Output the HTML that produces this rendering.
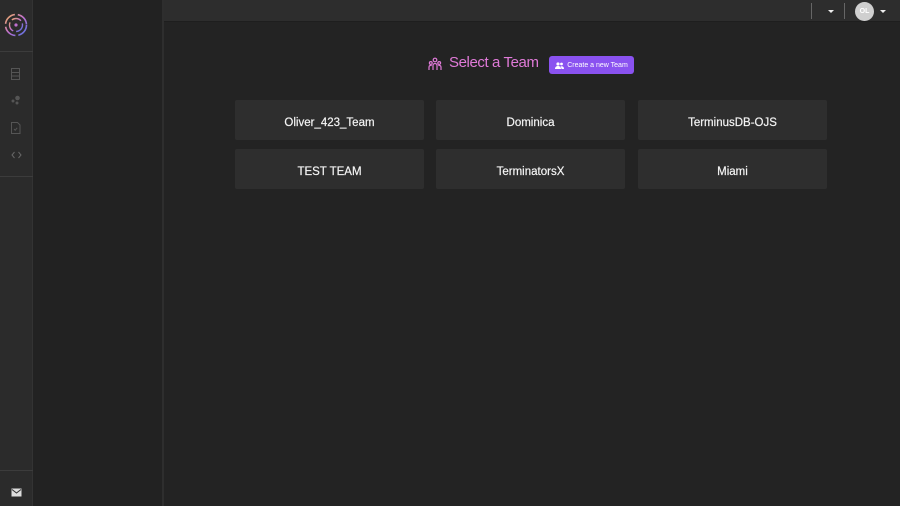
<!DOCTYPE html>
<html><head><style>
*{margin:0;padding:0;box-sizing:border-box}
body{width:900px;height:506px;background:#232323;font-family:"Liberation Sans",sans-serif;position:relative;overflow:hidden}
.rail{position:absolute;left:0;top:0;width:33px;height:506px;background:#2b2b2b;border-right:1px solid #333}
.panel{position:absolute;left:33px;top:0;width:129px;height:506px;background:#222}
.sep{position:absolute;left:162px;top:0;width:2px;height:506px;background:#2e2e2e}
.top{position:absolute;left:164px;top:0;width:736px;height:22px;background:#2d2d2d;border-bottom:1px solid #1e1e1e}
.hl{position:absolute;left:0;width:33px;height:1px;background:#3c3c3c}
.card{position:absolute;width:189px;height:40px;background:#2e2e2e;border-radius:2px;color:#f4f4f4;font-size:11.5px;padding-top:5px;display:flex;align-items:center;justify-content:center;-webkit-text-stroke:0.2px #f4f4f4}
</style></head><body>
<div class="rail">
<svg style="position:absolute;left:4px;top:13px" width="24" height="24" viewBox="0 0 24 24">
<defs><linearGradient id="g" x1="0" y1="0" x2="1" y2="1"><stop offset="0" stop-color="#f0b060"/><stop offset=".5" stop-color="#c070d0"/><stop offset="1" stop-color="#5070e0"/></linearGradient></defs>
<circle cx="12" cy="12" r="10.5" fill="none" stroke="url(#g)" stroke-width="1.6" stroke-dasharray="14 3"/>
<circle cx="12" cy="12" r="6.5" fill="none" stroke="url(#g)" stroke-width="1.4" stroke-dasharray="10 3"/>
<circle cx="12" cy="12" r="1.6" fill="#c070d0"/></svg>
<div class="hl" style="top:51px"></div>
<svg style="position:absolute;left:11px;top:68px" width="10" height="12"><rect x=".5" y=".5" width="8" height="11" fill="none" stroke="#555"/><path d="M1 4.5h7M1 8h7" stroke="#555"/></svg>
<svg style="position:absolute;left:11px;top:95px" width="10" height="10"><circle cx="6.5" cy="3" r="2.3" fill="#555"/><circle cx="2" cy="6" r="1.5" fill="#555"/><circle cx="6" cy="8" r="1.5" fill="#555"/></svg>
<svg style="position:absolute;left:11px;top:122px" width="10" height="12"><path d="M.5 .5h6l2.5 2.5v8.5h-8.5z" fill="none" stroke="#555"/><path d="M3 7l1.2 1.2 2-2.4" stroke="#555" fill="none"/></svg>
<svg style="position:absolute;left:11px;top:151px" width="11" height="8"><path d="M3.5 1L1 4l2.5 3M7.5 1L10 4 7.5 7" stroke="#666" fill="none"/></svg>
<div class="hl" style="top:176px"></div>
<div class="hl" style="top:470px"></div>
<svg style="position:absolute;left:11px;top:488px" width="11" height="9"><rect x=".5" y=".5" width="10" height="8" fill="#ddd"/><path d="M1 1.5l4.5 3.5L10 1.5" stroke="#333" fill="none"/></svg>
</div>
<div class="panel"></div>
<div class="sep"></div>
<div class="top">
<div style="position:absolute;left:647px;top:3px;width:1px;height:16px;background:#666"></div>
<div style="position:absolute;left:664px;top:10px;border:3px solid transparent;border-top:3px solid #eee;border-bottom:0"></div>
<div style="position:absolute;left:680px;top:3px;width:1px;height:16px;background:#666"></div>
<div style="position:absolute;left:691px;top:2px;width:19px;height:19px;border-radius:50%;background:#cfcfcf;color:#fff;font-size:7px;font-weight:bold;display:flex;align-items:center;justify-content:center">OL</div>
<div style="position:absolute;left:716px;top:10px;border:3px solid transparent;border-top:3px solid #eee;border-bottom:0"></div>
</div>
<svg style="position:absolute;left:428px;top:57px" width="14" height="14" viewBox="0 0 14 14" fill="none" stroke="#e07ad8" stroke-width="1.2"><circle cx="7" cy="3" r="1.8"/><circle cx="2.8" cy="6" r="1.4"/><circle cx="11.2" cy="6" r="1.4"/><path d="M5 13V8.5a2 2 0 0 1 4 0V13M1 13v-3a1.6 1.6 0 0 1 2.6-1.2M13 13v-3a1.6 1.6 0 0 0-2.6-1.2"/></svg>
<div style="position:absolute;left:449px;top:54px;color:#e07ad8;font-size:15px;letter-spacing:-0.4px">Select a Team</div>
<div style="position:absolute;left:549px;top:56px;width:85px;height:18px;background:#8a52f0;border-radius:3px;color:#fff;font-size:7px;display:flex;align-items:center;justify-content:center;gap:3px"><svg width="9" height="7" viewBox="0 0 9 7" fill="#fff"><circle cx="3" cy="2" r="1.6"/><circle cx="6.5" cy="2" r="1.4"/><path d="M0 7c0-2 1.3-3 3-3s3 1 3 3zM6.5 7H9c0-1.8-1-2.7-2.5-2.7-.5 0-.8.1-1.1.3.7.6 1.1 1.4 1.1 2.4z"/></svg>Create a new Team</div>
<div class="card" style="left:235px;top:100px">Oliver_423_Team</div>
<div class="card" style="left:436px;top:100px">Dominica</div>
<div class="card" style="left:638px;top:100px">TerminusDB-OJS</div>
<div class="card" style="left:235px;top:149px">TEST TEAM</div>
<div class="card" style="left:436px;top:149px">TerminatorsX</div>
<div class="card" style="left:638px;top:149px">Miami</div>
</body></html>
